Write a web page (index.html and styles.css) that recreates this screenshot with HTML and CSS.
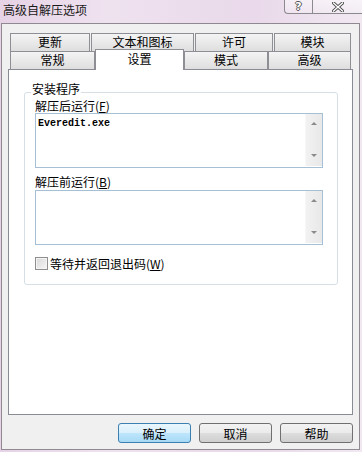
FILE: index.html
```html
<!DOCTYPE html>
<html lang="zh-CN">
<head>
  <meta charset="UTF-8" />
  <title>高级自解压选项</title>
  <link rel="stylesheet" href="styles.css">
</head>
<body>
  <div class="window">
    <div class="titlebar">
      <span class="title">高级自解压选项</span>
      <div class="caption">
        <span class="cap-btn help">?</span>
        <span class="cap-btn close">
          <svg width="12" height="10" viewBox="0 0 12 10">
            <path d="M1.5 1 L10.5 9 M10.5 1 L1.5 9" stroke="#4a4a4a" stroke-width="3.2" stroke-linecap="square"/>
            <path d="M1.5 1 L10.5 9 M10.5 1 L1.5 9" stroke="#fff" stroke-width="1.4" stroke-linecap="square"/>
          </svg>
        </span>
      </div>
    </div>

    <div class="client">
      <div class="tabs">
        <div class="tab-row">
          <div class="tab t-update">更新</div>
          <div class="tab t-text">文本和图标</div>
          <div class="tab t-license">许可</div>
          <div class="tab t-module">模块</div>
        </div>
        <div class="tab-row">
          <div class="tab t-general">常规</div>
          <div class="tab t-setup active">设置</div>
          <div class="tab t-mode">模式</div>
          <div class="tab t-advanced">高级</div>
        </div>
      </div>

      <div class="panel">
        <div class="group">
          <div class="group-title">安装程序</div>

          <div class="field-label first">解压后运行(<u>F</u>)</div>
          <div class="memo">
            <div class="memo-text">Everedit.exe</div>
            <div class="scroll">
              <span class="arrow up"></span>
              <span class="arrow down"></span>
            </div>
          </div>

          <div class="field-label">解压前运行(<u>B</u>)</div>
          <div class="memo">
            <div class="memo-text"></div>
            <div class="scroll">
              <span class="arrow up"></span>
              <span class="arrow down"></span>
            </div>
          </div>

          <label class="check">
            <span class="box"></span>
            等待并返回退出码(<u>W</u>)
          </label>
        </div>
      </div>

      <div class="buttons">
        <button class="btn default">确定</button>
        <button class="btn">取消</button>
        <button class="btn">帮助</button>
      </div>
    </div>
  </div>
</body>
</html>
```

FILE: styles.css
```css
body {
  margin: 0;
  font-family: "Noto Sans CJK SC", "Liberation Sans", sans-serif;
  font-size: 12px;
  color: #000;
}
.window {
  width: 362px;
  height: 452px;
  overflow: hidden;
  background: linear-gradient(to right, #e6d3e6 0%, #efe2ef 30%, #e9d9ea 70%, #f1e8f2 100%);
}

/* barre de titre */
.titlebar {
  height: 23px;
  display: flex;
  justify-content: space-between;
  align-items: flex-start;
}
.title {
  padding: 3px 0 0 3px;
  line-height: 14px;
  color: #1a1a1a;
}
.caption {
  display: flex;
}
.cap-btn {
  height: 14px;
  display: flex;
  align-items: center;
  justify-content: center;
  box-sizing: border-box;
  border: 1px solid #8d8a8f;
  border-top: none;
  background: linear-gradient(to bottom, rgba(255,255,255,0.5), rgba(255,255,255,0.2));
}
.cap-btn.help {
  width: 28px;
  border-right: none;
  border-bottom-left-radius: 4px;
  font-family: "DejaVu Sans", sans-serif;
  font-weight: bold;
  font-size: 11px;
  color: #fff;
  text-shadow: 1px 0 0 #555, -1px 0 0 #555, 0 1px 0 #555, 0 -1px 0 #555;
}
.cap-btn.close {
  width: 50px;
  border-right: none;
}

/* zone client */
.client {
  box-sizing: border-box;
  width: 359px;
  height: 427px;
  margin-left: 1px;
  border: 1px solid #8f8a92;
  background: #f0f0f0;
  padding: 9px 6px 0 6px;
}
.tabs {
  margin: 0 2px;
}
.tab-row {
  display: flex;
  height: 18px;
}
.tab {
  box-sizing: border-box;
  height: 18px;
  border: 1px solid #8e8f94;
  border-bottom: none;
  background: linear-gradient(to bottom, #f4f4f4, #dedede);
  text-align: center;
  line-height: 16px;
}
.tab-row:first-child .tab {
  margin-right: 1px;
}
.tab-row:first-child .tab:last-child {
  margin-right: 0;
}
.t-update { width: 80px; }
.t-text { width: 103px; }
.t-license { width: 78px; }
.t-module { width: 77px; }
.t-general { width: 85px; }
.t-setup { width: 89px; }
.t-mode { width: 84px; }
.t-advanced { width: 83px; }
.tab.active {
  position: relative;
  z-index: 1;
  height: 21px;
  margin-top: -2px;
  margin-bottom: -1px;
  background: #fff;
  line-height: 17px;
}

.panel {
  box-sizing: border-box;
  height: 346px;
  border: 1px solid #898c95;
  background: #fff;
  padding-top: 22px;
}
.group {
  box-sizing: border-box;
  width: 314px;
  margin-left: 15px;
  border: 1px solid #d5dfe5;
  border-radius: 3px;
  padding: 0 0 14px 10px;
}
.group-title {
  display: table;
  margin: -11px 0 0 -4px;
  padding: 0 1px;
  background: #fff;
  line-height: 14px;
}
.field-label {
  line-height: 12px;
  margin: 7px 0 1px;
}
.field-label.first {
  margin-top: 4px;
}
.memo {
  box-sizing: border-box;
  width: 288px;
  height: 55px;
  border: 1px solid #a5bfd6;
  display: flex;
}
.memo + .field-label {
  margin-top: 8px;
  margin-bottom: 2px;
}
.memo-text {
  flex: 1;
  padding: 4px 2px;
  font-family: "Liberation Mono", monospace;
  font-size: 10px;
  font-weight: bold;
  line-height: 12px;
}
.scroll {
  width: 17px;
  margin: 0 0 1px;
  background: linear-gradient(to right, #f2f2f2, #e8e8e8);
  border-left: 1px solid #f7f7f7;
  display: flex;
  flex-direction: column;
  justify-content: space-between;
  align-items: center;
  padding: 8px 0 9px;
  box-sizing: border-box;
}
.arrow {
  width: 0;
  height: 0;
  border-left: 3px solid transparent;
  border-right: 3px solid transparent;
}
.arrow.up { border-bottom: 3px solid #8a8a8a; }
.arrow.down { border-top: 3px solid #8a8a8a; }

.check {
  display: flex;
  align-items: center;
  margin-top: 12px;
  height: 13px;
  line-height: 13px;
}
.box {
  box-sizing: border-box;
  width: 13px;
  height: 13px;
  margin-right: 2px;
  border: 1px solid #8f8f8f;
  background: linear-gradient(135deg, #d8d8d8, #f6f6f6);
  box-shadow: inset 0 0 0 1px #f4f4f4;
}

.buttons {
  display: flex;
  justify-content: flex-end;
  gap: 8px;
  margin-top: 8px;
}
.btn {
  box-sizing: border-box;
  width: 73px;
  height: 20px;
  padding: 0;
  border: 1px solid #707070;
  border-radius: 3px;
  background: linear-gradient(to bottom, #f2f2f2 0%, #ebebeb 50%, #dddddd 51%, #cfcfcf 100%);
  font-family: inherit;
  font-size: 12px;
  line-height: 17px;
  color: #000;
}
.btn.default {
  border-color: #3c7fb1;
  background: linear-gradient(to bottom, #eaf6fd 0%, #d9f0fc 50%, #bee6fd 51%, #a7d9f5 100%);
}
```
